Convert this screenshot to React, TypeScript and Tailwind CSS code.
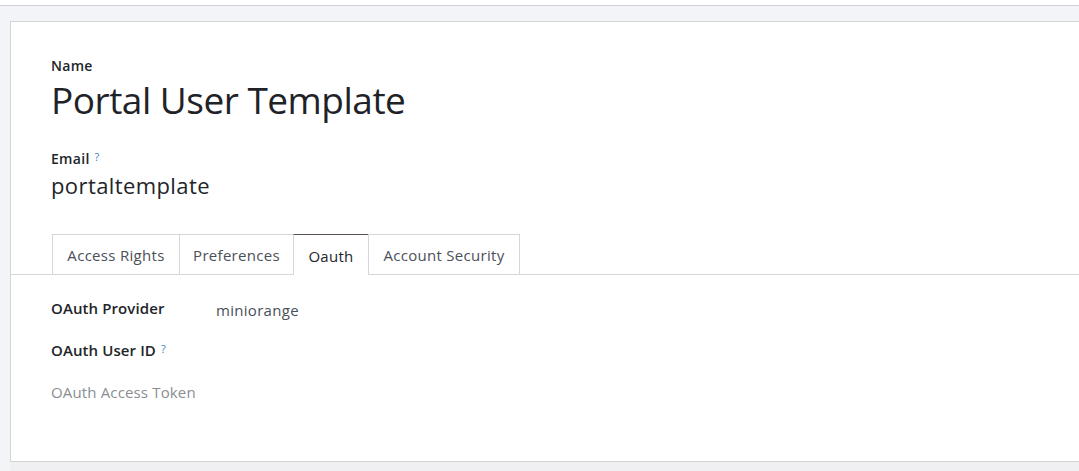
const tabs = [
  { label: "Access Rights", w: "w-[128px]" },
  { label: "Preferences", w: "w-[115px]" },
  { label: "Oauth", w: "w-[76px]", active: true },
  { label: "Account Security", w: "w-[152px]" },
];

const Help: React.FC = () => (
  <sup className="ml-[5px] text-[11px] font-normal text-[#3b82c4] relative -top-[3px]">?</sup>
);

export default function App() {
  return (
    <div
      className="h-[471px] w-[1079px] overflow-hidden bg-white"
      style={{ fontFamily: '"Open Sans", "Noto Sans", sans-serif' }}
    >
      <div className="mt-[5px] h-[466px] border-t border-[#d2d2d6] bg-[#f3f4f8] pl-[10px] pt-[15px]">
        <div className="h-[441px] border-y border-l border-[#d4d4d8] bg-white pt-[34px]">
          <div className="pl-[40px]">
            {/* Name */}
            <div className="text-[14px] leading-[20px] font-semibold text-[#212529] tracking-[0.3px]">
              Name
            </div>
            <h1 className="mt-[1px] text-[37px] leading-[46px] text-[#1f2328] tracking-[-0.5px]">
              Portal User Template
            </h1>

            {/* Email */}
            <div className="mt-[26px] text-[14px] leading-[20px] font-semibold text-[#212529] tracking-[0.3px]">
              Email
              <Help />
            </div>
            <div className="mt-[1px] text-[22px] leading-[30px] text-[#212529] tracking-[0.4px]">
              portaltemplate
            </div>
          </div>

          {/* Tabs */}
          <div className="mt-[34px] flex border-b border-[#d6d6da] pl-[41px]">
            {tabs.map((t) =>
              t.active ? (
                <div
                  key={t.label}
                  className={`${t.w} -mb-px -ml-px flex h-[41px] items-center justify-center border-x border-t border-x-[#d6d6da] border-t-[#5a5050] bg-white pt-[2px] text-[15px] text-[#212529] tracking-[0.3px]`}
                >
                  {t.label}
                </div>
              ) : (
                <div
                  key={t.label}
                  className={`${t.w} -ml-px flex h-[40px] items-center justify-center border-x border-t border-[#d6d6da] pt-[2px] text-[15px] text-[#4a5058] tracking-[0.3px] first:ml-0`}
                >
                  {t.label}
                </div>
              )
            )}
          </div>

          {/* OAuth fields */}
          <div className="pl-[40px] text-[15px] leading-[22px]">
            <div className="mt-[22px] flex">
              <div className="w-[165px] font-semibold text-[#212529] tracking-[0.1px]">
                OAuth Provider
              </div>
              <div className="mt-[2px] text-[#495057] tracking-[0.3px]">miniorange</div>
            </div>
            <div className="mt-[18px] font-semibold text-[#212529] tracking-[0.1px]">
              OAuth User ID
              <Help />
            </div>
            <div className="mt-[20px] text-[#8a8d92] tracking-[0.15px]">OAuth Access Token</div>
          </div>
        </div>
        <div className="h-[10px] bg-[#f0f0f3]" />
      </div>
    </div>
  );
}
